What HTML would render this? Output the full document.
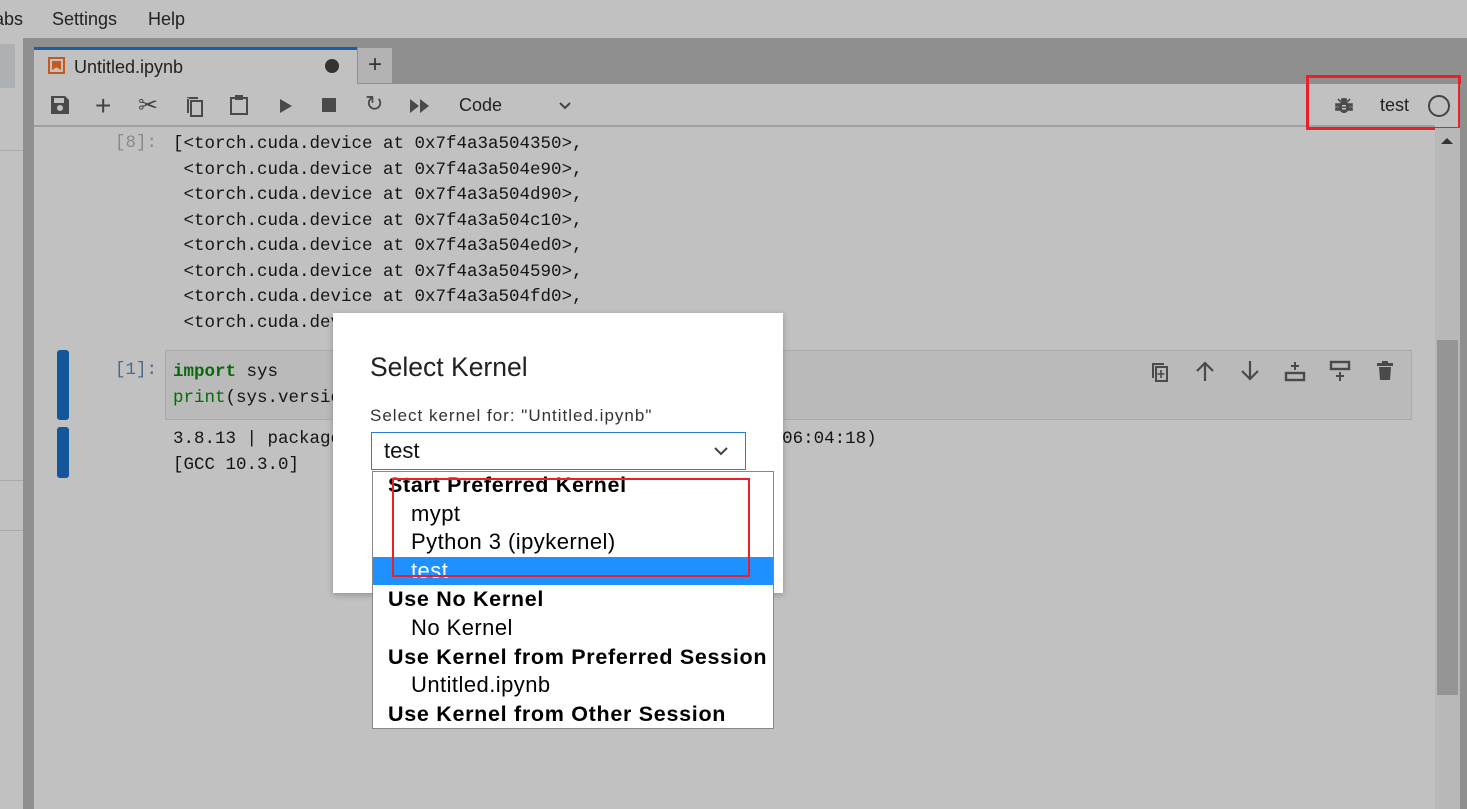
<!DOCTYPE html>
<html><head><style>
*{margin:0;padding:0;box-sizing:border-box}
body{width:1467px;height:809px;overflow:hidden;background:#c1c1c1;font-family:"Liberation Sans",sans-serif;position:relative}
.a{position:absolute}
.mono{font-family:"Liberation Mono",monospace;font-size:17.5px;color:#141414;white-space:pre}
.ico{position:absolute;fill:#4a4a4a}
.dd div{height:28.6px;line-height:28.6px;font-size:22px;color:#000;white-space:nowrap;letter-spacing:0.45px}
.dd .h{font-weight:bold;padding-left:15px;font-size:21.5px;letter-spacing:0.7px}
.dd .i{padding-left:38px}
</style></head><body>
<div class="a" style="left:-6px;top:9px;font-size:18px;color:#222">abs</div>
<div class="a" style="left:52px;top:9px;font-size:18px;color:#222">Settings</div>
<div class="a" style="left:148px;top:9px;font-size:18px;color:#222">Help</div>
<div class="a" style="left:0;top:44px;width:15px;height:44px;background:#adb1b3"></div>
<div class="a" style="left:0;top:150px;width:23px;height:1px;background:#aaa"></div>
<div class="a" style="left:0;top:480px;width:23px;height:1px;background:#aaa"></div>
<div class="a" style="left:0;top:530px;width:23px;height:1px;background:#aaa"></div>
<div class="a" style="left:23px;top:38px;width:11px;height:771px;background:#8f8f8f"></div>
<div class="a" style="left:34px;top:38px;width:1433px;height:46px;background:#8f8f8f"></div>
<div class="a" style="left:34px;top:47px;width:323px;height:38px;background:#c1c1c1;border-top:3px solid #1a5fa0"></div>
<div class="a" style="left:48px;top:57px;width:17px;height:17px;border:2px solid #c65a1e;background:#c1c1c1"><div style="position:absolute;left:2px;top:2px;width:9px;height:9px;background:#c65a1e;clip-path:polygon(0 0,100% 0,100% 100%,50% 70%,0 100%)"></div></div>
<div class="a" style="left:74px;top:57px;font-size:18px;color:#222">Untitled.ipynb</div>
<div class="a" style="left:325px;top:59px;width:14px;height:14px;border-radius:50%;background:#333"></div>
<div class="a" style="left:358px;top:48px;width:34px;height:35px;background:#b3b3b3;font-size:24px;color:#333;text-align:center;line-height:34px">+</div>
<div class="a" style="left:34px;top:84px;width:1401px;height:43px;background:#c1c1c1;border-bottom:2px solid #a0a0a0"></div>
<svg class="ico" style="left:50px;top:95px" width="20" height="20" viewBox="0 0 20 20"><path d="M1 1h14l4 4v14H1z"/><rect x="4" y="3" width="10" height="5" fill="#c1c1c1"/><circle cx="10" cy="13" r="3" fill="#c1c1c1"/></svg>
<div class="a" style="left:95px;top:90px;font-size:28px;color:#444">+</div>
<div class="a" style="left:138px;top:91px;font-size:24px;color:#444">✂</div>
<svg class="ico" style="left:185px;top:95px" width="20" height="22" viewBox="0 0 20 22"><path d="M2 3v15h2V3z M2 2h11v2H2z" /><rect x="6" y="6" width="11" height="15" fill="none" stroke="#4a4a4a" stroke-width="2"/></svg>
<svg class="ico" style="left:229px;top:94px" width="20" height="22" viewBox="0 0 20 22"><rect x="2" y="4" width="16" height="16" fill="none" stroke="#4a4a4a" stroke-width="2"/><rect x="6" y="1" width="8" height="5"/></svg>
<svg class="ico" style="left:279px;top:98px" width="14" height="16"><path d="M1 1L13 8L1 15z"/></svg>
<div class="a" style="left:322px;top:98px;width:14px;height:14px;background:#4a4a4a"></div>
<div class="a" style="left:365px;top:91px;font-size:22px;color:#4a4a4a">↻</div>
<svg class="ico" style="left:410px;top:99px" width="20" height="14"><path d="M0 0L9 7L0 14z M10 0L19 7L10 14z"/></svg>
<div class="a" style="left:459px;top:95px;font-size:18px;color:#222">Code</div>
<svg class="a" style="left:558px;top:101px" width="14" height="10"><path d="M2 2L7 7L12 2" fill="none" stroke="#444" stroke-width="2"/></svg>
<svg class="ico" style="left:1334px;top:95px" width="20" height="20" viewBox="0 0 20 20"><ellipse cx="10" cy="12" rx="5" ry="6"/><rect x="7" y="3" width="6" height="4" rx="2"/><path d="M2 9h16v2H2zM2 13h16v2H2zM4 4l3 3M16 4l-3 3" stroke="#4a4a4a" stroke-width="1.6"/><rect x="8" y="10" width="4" height="1.5" fill="#c1c1c1"/><rect x="8" y="13" width="4" height="1.5" fill="#c1c1c1"/></svg>
<div class="a" style="left:1380px;top:95px;font-size:18px;color:#222">test</div>
<div class="a" style="left:1428px;top:95px;width:22px;height:22px;border-radius:50%;border:2px solid #444"></div>
<div class="a" style="left:1306px;top:75px;width:155px;height:55px;border:3px solid #e8202a"></div>
<div class="a" style="left:1435px;top:128px;width:25px;height:681px;background:#b8b8b8"></div>
<svg class="a" style="left:1440px;top:136px" width="14" height="10"><path d="M1 8L7 2L13 8z" fill="#333"/></svg>
<div class="a" style="left:1437px;top:340px;width:21px;height:355px;background:#959595"></div>
<div class="a" style="left:1460px;top:84px;width:7px;height:725px;background:#8f8f8f"></div>
<div class="a mono" style="left:115px;top:133px;color:#8a8a8a">[8]:</div>
<div class="a mono" style="left:173px;top:132px;line-height:25.5px">[&lt;torch.cuda.device at 0x7f4a3a504350&gt;,
 &lt;torch.cuda.device at 0x7f4a3a504e90&gt;,
 &lt;torch.cuda.device at 0x7f4a3a504d90&gt;,
 &lt;torch.cuda.device at 0x7f4a3a504c10&gt;,
 &lt;torch.cuda.device at 0x7f4a3a504ed0&gt;,
 &lt;torch.cuda.device at 0x7f4a3a504590&gt;,
 &lt;torch.cuda.device at 0x7f4a3a504fd0&gt;,
 &lt;torch.cuda.device at 0x7f4a3a504fd0&gt;]</div>
<div class="a" style="left:57px;top:350px;width:12px;height:70px;background:#14569a;border-radius:3px"></div>
<div class="a" style="left:57px;top:427px;width:12px;height:51px;background:#14569a;border-radius:3px"></div>
<div class="a" style="left:165px;top:350px;width:1247px;height:70px;background:#bababa;border:1px solid #a9a9a9"></div>
<div class="a mono" style="left:115px;top:360px;color:#4a6a8a">[1]:</div>
<div class="a mono" style="left:173px;top:360px;line-height:25.5px"><b style="color:#0a6a0a">import</b> sys
<span style="color:#0a6a0a">print</span>(sys.version)</div>
<div class="a mono" style="left:173px;top:427px;line-height:25.5px">3.8.13 | packaged by conda-forge | (default, Mar 25 2022, 06:04:18)
[GCC 10.3.0]</div>
<svg class="ico" style="left:1150px;top:361px" width="20" height="22" viewBox="0 0 20 22"><path d="M2 2v15h2V4h10V2z"/><rect x="6" y="6" width="11" height="14" fill="none" stroke="#4a4a4a" stroke-width="2"/><path d="M11 9v8M7.5 13h7" stroke="#4a4a4a" stroke-width="1.6"/></svg>
<svg class="a" style="left:1194px;top:360px" width="22" height="22"><path d="M11 21V3M3 11l8-8 8 8" fill="none" stroke="#4a4a4a" stroke-width="2.2"/></svg>
<svg class="a" style="left:1239px;top:360px" width="22" height="22"><path d="M11 1v18M3 11l8 8 8-8" fill="none" stroke="#4a4a4a" stroke-width="2.2"/></svg>
<svg class="a" style="left:1284px;top:360px" width="22" height="22"><path d="M11 2v8M7 6h8" stroke="#4a4a4a" stroke-width="2"/><rect x="2" y="13" width="18" height="7" fill="none" stroke="#4a4a4a" stroke-width="2.4"/></svg>
<svg class="a" style="left:1329px;top:360px" width="22" height="22"><rect x="2" y="2" width="18" height="7" fill="none" stroke="#4a4a4a" stroke-width="2.4"/><path d="M11 12v9M7 16h8" stroke="#4a4a4a" stroke-width="2"/></svg>
<svg class="ico" style="left:1376px;top:361px" width="18" height="20"><path d="M1 2h16v3H1z M6 0h6v2H6z M3 6h12l-1 13H4z"/></svg>
<div class="a" style="left:333px;top:313px;width:450px;height:280px;background:#fff;box-shadow:0 2px 6px rgba(0,0,0,.25)"></div>
<div class="a" style="left:370px;top:352px;font-size:26.5px;color:#222">Select Kernel</div>
<div class="a" style="left:370px;top:406px;font-size:17px;letter-spacing:1px;color:#333">Select kernel for: "Untitled.ipynb"</div>
<div class="a" style="left:371px;top:432px;width:375px;height:38px;border:1px solid #2a7dd4"></div>
<div class="a" style="left:384px;top:438px;font-size:22px;color:#111">test</div>
<svg class="a" style="left:713px;top:446px" width="16" height="11"><path d="M2 2l6 6 6-6" fill="none" stroke="#444" stroke-width="2"/></svg>
<div class="a dd" style="left:372px;top:471px;width:402px;height:258px;background:#fff;border:1px solid #888;overflow:hidden">
<div class="h" style="margin-top:-1px">Start Preferred Kernel</div>
<div class="i">mypt</div>
<div class="i">Python 3 (ipykernel)</div>
<div class="i" style="background:#1e90ff;color:#fff">test</div>
<div class="h">Use No Kernel</div>
<div class="i">No Kernel</div>
<div class="h">Use Kernel from Preferred Session</div>
<div class="i">Untitled.ipynb</div>
<div class="h">Use Kernel from Other Session</div>
</div>
<div class="a" style="left:392px;top:478px;width:358px;height:99px;border:2px solid #e8202a"></div>
</body></html>
